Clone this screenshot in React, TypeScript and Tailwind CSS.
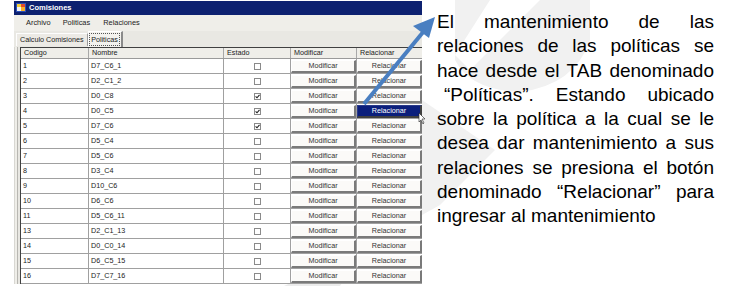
import React from "react";

type Row = { code: string; name: string; checked: boolean; selected?: boolean };

const rows: Row[] = [
  { code: "1", name: "D7_C6_1", checked: false },
  { code: "2", name: "D2_C1_2", checked: false },
  { code: "3", name: "D0_C8", checked: true },
  { code: "4", name: "D0_C5", checked: true, selected: true },
  { code: "5", name: "D7_C6", checked: true },
  { code: "6", name: "D5_C4", checked: false },
  { code: "7", name: "D5_C6", checked: false },
  { code: "8", name: "D3_C4", checked: false },
  { code: "9", name: "D10_C6", checked: false },
  { code: "10", name: "D6_C6", checked: false },
  { code: "11", name: "D5_C6_11", checked: false },
  { code: "13", name: "D2_C1_13", checked: false },
  { code: "14", name: "D0_C0_14", checked: false },
  { code: "15", name: "D6_C5_15", checked: false },
  { code: "16", name: "D7_C7_16", checked: false },
];

const lines = [
  "El mantenimiento de las",
  "relaciones de las políticas se",
  "hace desde el TAB denominado",
  "“Políticas”. Estando ubicado",
  "sobre la política a la cual se le",
  "desea dar mantenimiento a sus",
  "relaciones se presiona el botón",
  "denominado “Relacionar” para",
];

function Checkbox({ checked }: { checked: boolean }) {
  return (
    <div className="w-[7px] h-[7px] border border-[#8a8a8a] bg-white relative">
      {checked && (
        <svg className="absolute left-0 top-0" width="5" height="5" viewBox="0 0 5 5">
          <path d="M0.6 2.4 L2 3.8 L4.5 0.8" stroke="#222" strokeWidth="1.1" fill="none" />
        </svg>
      )}
    </div>
  );
}

function Btn({ label, selected }: { label: string; selected?: boolean }) {
  return (
    <div
      className={
        "w-full h-[13px] flex items-center justify-center border-t border-l border-b-2 border-r-2 " +
        (selected
          ? "bg-[#0b1f7c] text-white border-t-[#2a3a8a] border-l-[#2a3a8a] border-b-[#404040] border-r-[#404040]"
          : "bg-[#fbfaf8] text-[#333] border-t-white border-l-white border-b-[#7a7a7a] border-r-[#7a7a7a]")
      }
    >
      {label}
    </div>
  );
}

export default function App() {
  return (
    <div className="relative w-[744px] h-[286px] bg-white overflow-hidden flex">
      {/* watermark */}
      <svg className="absolute inset-0" width="744" height="286" viewBox="0 0 744 286">
        <path d="M455 0 L590 0 L590 40 Q575 85 520 92 Q470 90 455 60 Z" fill="#f1f1f1" />
        <path d="M490 0 L540 0 L470 70 L455 55 Z" fill="#ffffff" />
        <path d="M422 100 L495 150 L440 205 L422 215 Z" fill="#f1f1f1" />
        <path d="M303 277 L346 277 L340 286 L284 286 Z" fill="#ececec" />
      </svg>

      {/* window */}
      <div className="relative ml-[14px] mt-[1px] w-[408px] h-[283px] flex flex-col overflow-hidden text-[7.2px] leading-none [font-family:'Liberation_Sans',Arial,sans-serif]">
        {/* title bar */}
        <div className="h-[14px] bg-[#0d2170] flex items-center pl-[2px] gap-[3px]">
          <svg width="10" height="9" viewBox="0 0 10 9">
            <rect x="0" y="0" width="10" height="9" fill="#2b4fb8" />
            <rect x="1" y="1" width="4" height="3" fill="#f7d23a" />
            <rect x="5" y="1" width="4" height="3" fill="#e24a2a" />
            <rect x="1" y="4" width="4" height="4" fill="#f2f2f2" />
            <rect x="5" y="4" width="4" height="4" fill="#f7b02a" />
          </svg>
          <span className="text-white font-bold text-[7.5px]">Comisiones</span>
        </div>
        {/* menu */}
        <div className="h-[17px] bg-[#efeee9] flex items-center text-[#222] text-[7.4px]">
          <span className="ml-[12px]">Archivo</span>
          <span className="ml-[12px]">Politicas</span>
          <span className="ml-[13px]">Relaciones</span>
        </div>
        {/* tabs */}
        <div className="h-[16px] bg-[#e9e8e3] flex items-end text-[#222] text-[7.2px]">
          <div className="ml-[2px] h-[13px] px-[3px] flex items-center border-t border-l border-[#fdfdfd] border-r border-r-[#9a9a9a] bg-[#eceae5] mb-[1px]">
            Calculo Comisiones
          </div>
          <div className="h-[16px] w-[35px] flex items-center justify-center border-t border-l border-[#ffffff] border-r-2 border-r-[#8a8a8a] bg-[#f3f2ee]">
            <span className="px-[1px] py-[2px] border border-dotted border-[#555]">Politicas</span>
          </div>
        </div>
        {/* body */}
        <div className="flex-1 flex bg-[#efeee9]">
          <div className="w-[3px] border-l border-[#d8d7d2]" />
          <div className="w-[3px] border-l border-[#b8b7b2] bg-[#e8e7e2]" />
          <div className="flex-1 border-l border-t border-[#404040] bg-white">
            <div className="grid grid-cols-[67px_135px_67px_66px_66px] h-[11px] bg-[#efeee9] border-b border-[#9a9a9a] text-[#222]">
              {["Codigo", "Nombre", "Estado", "Modificar", "Relacionar"].map((h, i) => (
                <div
                  key={h}
                  className={"flex items-center pl-[3px] " + (i > 0 ? "border-l border-[#a8a8a8]" : "")}
                >
                  {h}
                </div>
              ))}
            </div>
            {rows.map((r) => (
              <div
                key={r.code}
                className="grid grid-cols-[67px_135px_67px_66px_66px] h-[15px] border-b border-[#a0a0a0] text-[#222]"
              >
                <div className="flex items-center pl-[2px]">{r.code}</div>
                <div className="flex items-center pl-[2px] border-l border-[#a0a0a0]">{r.name}</div>
                <div className="flex items-center justify-center border-l border-[#a0a0a0]">
                  <Checkbox checked={r.checked} />
                </div>
                <div className="flex items-center border-l border-[#a0a0a0]">
                  <Btn label="Modificar" />
                </div>
                <div className="flex items-center border-l border-[#a0a0a0]">
                  <Btn label="Relacionar" selected={r.selected} />
                </div>
              </div>
            ))}
          </div>
        </div>
      </div>

      {/* explanatory text */}
      <div className="relative ml-[15px] mt-[10px] w-[277px] text-[19px] leading-[24.25px] text-black [font-family:'Liberation_Sans',Arial,sans-serif]">
        {lines.map((l, i) => (
          <div key={i} className={"text-justify [text-align-last:justify] " + (i === 3 ? "pl-[7px]" : "")}>
            {l}
          </div>
        ))}
        <div>ingresar al mantenimiento</div>
      </div>

      {/* arrow */}
      <svg className="absolute inset-0 pointer-events-none" width="744" height="286" viewBox="0 0 744 286">
        <line x1="364" y1="104" x2="424" y2="31" stroke="#4a7fc1" strokeWidth="4" />
        <polygon points="435,17 429,38 413,26" fill="#4a7fc1" />
        <path d="M419 113 L419 122 L421 120 L423 124 L424 123 L422 119 L425 119 Z" fill="#fff" stroke="#222" strokeWidth="0.6" />
      </svg>
    </div>
  );
}
